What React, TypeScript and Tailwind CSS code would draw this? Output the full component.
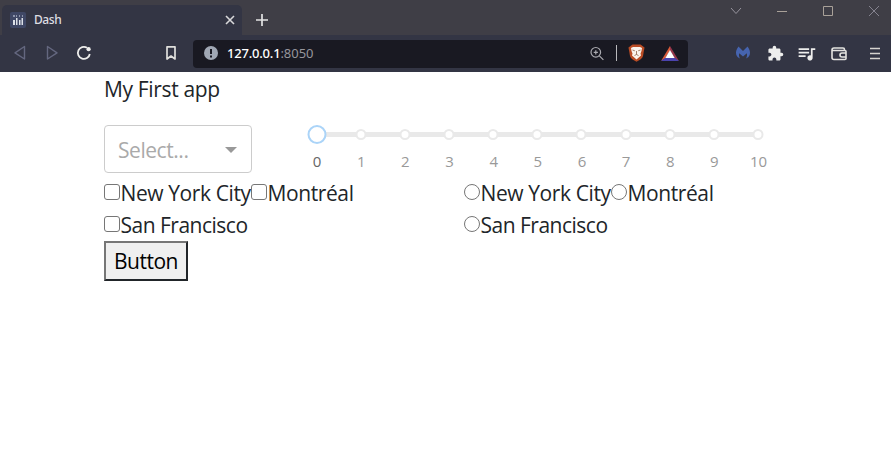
import React from "react";
import { MdExtension, MdQueueMusic } from "react-icons/md";

const marks = ["0", "1", "2", "3", "4", "5", "6", "7", "8", "9", "10"];

function TabStrip() {
  return (
    <div className="flex h-[35px] bg-[#3f3e46] pl-[2px]">
      <div className="mt-[5px] flex h-[30px] w-[240px] items-center rounded-t-[5px] bg-[#333544] pl-2 pr-[4px]">
        <svg width="16" height="16" viewBox="0 0 16 16">
          <rect width="16" height="16" rx="2" fill="#3f4765" />
          <path d="M3 3h2v2H3zM6 3h1v2H6zM9 3h1v2H9zM12 3h1v2h-1z" fill="#8c93ab" />
          <path d="M3 8h2v5H3zM6 6h1.5v7H6zM9 8h1.5v5H9zM11.5 6H13v7h-1.5z" fill="#dce0e8" />
        </svg>
        <span className="ml-2 grow font-['Noto_Sans',sans-serif] text-xs font-medium tracking-[-0.4px] text-[#dedee2]">Dash</span>
        <svg width="16" height="16" viewBox="0 0 16 16" fill="none" stroke="#d8d8da" strokeWidth="1.6">
          <path d="m4 4 8 8m0-8-8 8" />
        </svg>
      </div>
      <svg className="ml-[13px] mt-3" width="14" height="16" viewBox="0 0 14 16" stroke="#e3e3e4" strokeWidth="1.7">
        <path d="M1 8h12M7 2v12" />
      </svg>
      <div className="ml-auto mt-[5px] flex gap-[34px] pr-[11px]">
        <svg width="12" height="12" fill="none" stroke="#96939d"><path d="m1 3 5 5.500L11 3" /></svg>
        <svg width="12" height="12" stroke="#a9a199"><path d="M1 6.500h10" /></svg>
        <svg width="12" height="12" fill="none" stroke="#a9a199"><path d="M1.500 1.500h9v9h-9z" /></svg>
        <svg width="12" height="12" stroke="#85838f"><path d="m1 1 10 10M11 1 1 11" /></svg>
      </div>
    </div>
  );
}

function Toolbar() {
  return (
    <div className="flex h-[37px] items-center bg-[#333544]">
      <svg className="ml-[13px] mb-px" width="14" height="16" fill="none" stroke="#64677f" strokeWidth="1.4" strokeLinejoin="round">
        <path d="M11.500 1.500v12.500L2 7.800z" />
      </svg>
      <svg className="ml-[18px] mb-px" width="14" height="16" fill="none" stroke="#64677f" strokeWidth="1.4" strokeLinejoin="round">
        <path d="M2.500 1.500v12.500L12 7.800z" />
      </svg>
      <svg className="ml-[17px] mb-px" width="16" height="16" fill="none" stroke="#eeeeec" strokeWidth="1.8">
        <path d="M13.800 9A6 6 0 1 1 11 2.800" />
        <circle cx="12.600" cy="4.200" r="2.100" fill="#eeeeec" stroke="none" />
      </svg>
      <svg className="ml-[71px] mb-px" width="16" height="16" fill="none" stroke="#e0dfdc" strokeWidth="1.7">
        <path d="M4 1.800h8V14l-4-3-4 3z" strokeLinejoin="round" />
      </svg>
      <div className="ml-[14px] flex h-7 w-[495px] items-center rounded-[4px] bg-[#191922] pl-[11px]">
        <svg className="mb-px" width="14" height="14" viewBox="0 0 14 14">
          <circle cx="7" cy="7" r="7" fill="#a0a7b4" />
          <path d="M6 3h2v5H6zM6 9.500h2v2H6z" fill="#191922" />
        </svg>
        <span className="ml-[9px] grow font-['Noto_Sans',sans-serif] text-[13px] tracking-[-0.05px] text-[#96959c]">
          <span className="font-medium tracking-[-0.2px] text-white">127.0.0.1</span>:8050
        </span>
        <svg width="16" height="16" fill="none" stroke="#aaaab0" strokeWidth="1.2">
          <circle cx="6.800" cy="6.300" r="4.800" />
          <path d="m10.400 9.900 4 4M4.700 6.300h4.200M6.800 4.200v4.200" />
        </svg>
        <div className="ml-[11px] mb-px h-4 w-px bg-[#b9b9bc]" />
        <svg className="ml-[11px] mb-px" width="17" height="18" viewBox="0 0 17 18">
          <path d="M4.500.5h8L16.500 3.500 15 12c-.5 2.300-3.500 4.200-6.500 5.800C5.500 16.200 2.500 14.300 2 12L.5 3.500z" fill="#b94c25" />
          <path d="M5 3h7l2 1-.5 3-1 2.500.5 2-4.500 4-4.500-4 .5-2-1-2.500L3 4z" fill="#faf4ed" />
          <path d="m4.500 6 2.300.8M12.500 6l-2.300.8M8.500 7v3.500M6.500 11.500l2-1 2 1" fill="none" stroke="#8e6048" strokeWidth=".8" />
        </svg>
        <svg className="ml-4 mr-[9px]" width="18" height="16" viewBox="0 0 18 16">
          <path d="M9 0v4.500L4 12.500 0 15z" fill="#d95a39" />
          <path d="M9 0v4.500l5 8 4 2.500z" fill="#97364a" />
          <path d="M0 15 4 12h10l4 3z" fill="#4a43ad" />
          <path d="m9 4 4.700 8H4.300z" fill="#fff" />
        </svg>
      </div>
      <svg className="ml-[47px] mb-px" width="16" height="16" viewBox="0 0 16 16">
        <path d="M3.500 1.500 8 6l4.500-4.500C14.500 4 15.500 7 14.800 9.500c-.5 2-1.900 3.300-3.800 3.900 1-1.500 1.300-3.200.8-5.200L8 11.500 4.200 8.200c-.5 2-.2 3.700.8 5.200-1.900-.6-3.300-1.900-3.800-3.900C.5 7 1.500 4 3.500 1.500z" fill="#4664af" />
      </svg>
      <MdExtension className="ml-4 mb-px size-[17px] text-[#eeeeed]" />
      <MdQueueMusic className="ml-[12px] mb-px size-[21px] text-[#eeeeed]" />
      <svg className="ml-[13px]" width="18" height="16" fill="none" stroke="#e4e3e0" strokeWidth="1.600">
        <path d="M14.500 4V3.500a1.500 1.500 0 0 0-1.500-1.500H4a2 2 0 0 0-2 2v7.500a2 2 0 0 0 2 2h11a1 1 0 0 0 1-1V5.500a1 1 0 0 0-1-1H2.500M16 7h-4a2 2 0 0 0 0 4h4" />
      </svg>
      <svg className="ml-[22px]" width="11" height="16" stroke="#d6d4d0" strokeWidth="1.700">
        <path d="M0 2.500h10M0 7.500h10M0 12.500h10" />
      </svg>
    </div>
  );
}

function Slider() {
  return (
    <div className="ml-[56px] flex w-[468px] flex-col pt-[1px]">
      <div className="relative h-[18px]">
        <div className="absolute left-[9px] top-[6px] h-[5px] w-[441px] bg-[#e9e9e9]" />
        {marks.map((mark, i) => (
          <span
            key={mark}
            className={
              i === 0
                ? "absolute top-[-1px] size-[19px] -translate-x-1/2 rounded-full border-2 border-[#abd4f8] bg-white"
                : "absolute top-[3px] size-[11px] -translate-x-1/2 rounded-full border-2 border-[#e9e9e9] bg-white"
            }
            style={{ left: 8.5 + i * 44.15 }}
          />
        ))}
      </div>
      <div className="ml-[-13px] mt-[5px] flex">
        {marks.map((mark, i) => (
          <span
            key={mark}
            className={
              "w-[44.15px] shrink-0 text-center text-[15px] leading-6 tracking-[-0.1px] " +
              (i === 0 ? "text-[#666]" : "text-[#999]")
            }
          >
            {mark}
          </span>
        ))}
      </div>
    </div>
  );
}

function Choice({ label, kind, tracking }: { label: string; kind: "checkbox" | "radio"; tracking: string }) {
  return (
    <label className="flex h-8 items-center">
      <input
        type={kind}
        className={
          "mb-[2px] size-4 shrink-0 appearance-none border border-[#767676] bg-white " +
          (kind === "radio" ? "rounded-full" : "rounded-[3px]")
        }
      />
      <span className={tracking}>{label}</span>
    </label>
  );
}

function Choices({ kind }: { kind: "checkbox" | "radio" }) {
  return (
    <div className="w-[360px]">
      <div className="flex">
        <div className="w-[147px] whitespace-nowrap">
          <Choice kind={kind} label="New York City" tracking="pl-[0.5px] tracking-[-0.4px]" />
        </div>
        <Choice kind={kind} label="Montréal" tracking="pl-[0.5px] tracking-[-0.4px]" />
      </div>
      <Choice kind={kind} label="San Francisco" tracking="pl-[0.5px] tracking-[-0.5px]" />
    </div>
  );
}

export default function App() {
  return (
    <div className="h-[461px] overflow-hidden bg-white font-['Open_Sans','Noto_Sans',sans-serif]">
      <TabStrip />
      <Toolbar />
      <main className="pl-[104px] text-[21px] leading-8 text-[#212529]">
        <p className="pt-px tracking-[-0.35px]">My First app</p>
        <div className="mt-5 flex">
          <div className="flex h-12 w-[148px] items-center justify-between rounded-[4px] border border-[#ccc] pl-[13px] pr-[14px] text-[#aaa]">
            <span className="pt-[2px] tracking-[-0.45px]">Select...</span>
            <div className="mt-px border-x-[6.5px] border-t-[6px] border-x-transparent border-t-[#999]" />
          </div>
          <Slider />
        </div>
        <div className="mt-1 flex">
          <Choices kind="checkbox" />
          <Choices kind="radio" />
        </div>
        <button className="flex h-10 w-[84px] items-center justify-center border-2 border-b-[#212529] border-l-[#767676] border-r-[#212529] border-t-[#767676] bg-[#efefef] tracking-[-0.5px] text-black">
          Button
        </button>
      </main>
    </div>
  );
}
